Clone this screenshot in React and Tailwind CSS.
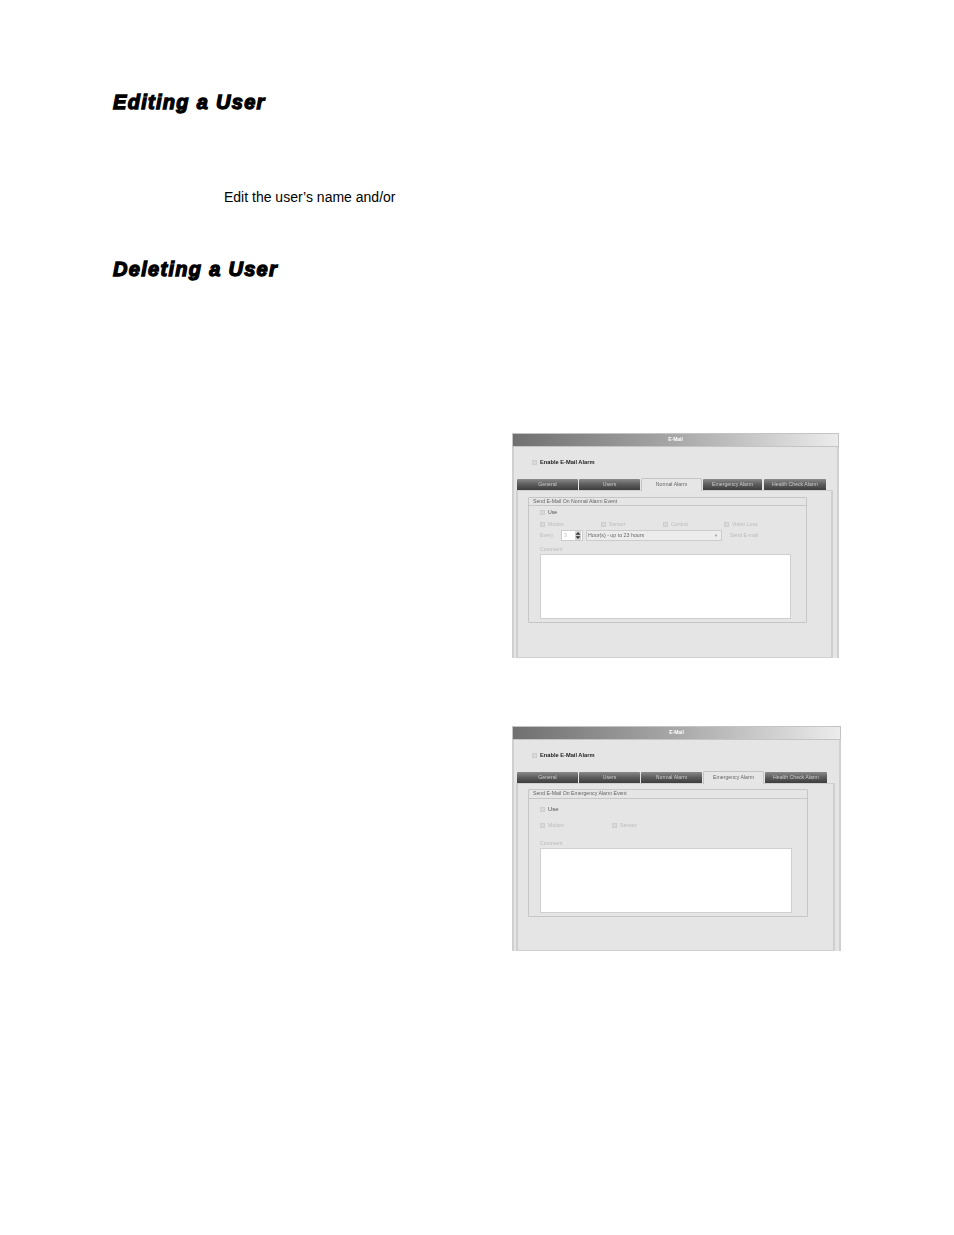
import React from 'react';

const Check = ({ label, className = '', labelClass = 'text-[#bbb] text-[5.2px]' }) => (
  <div className={`flex items-center gap-[3px] ${className}`}>
    <span className="w-[5px] h-[5px] bg-[#d9d9d9] border border-[#cdcdcd]" />
    <span className={`leading-[6px] ${labelClass}`}>{label}</span>
  </div>
);

const Tab = ({ label, active, className = '' }) =>
  active ? (
    <div className={`h-[13px] -mt-[1px] -mb-[1px] z-10 flex items-center justify-center text-[5.2px] text-[#666] bg-[#e6e6e6] border border-b-0 border-[#c4c4c4] rounded-t-[2px] ${className}`}>
      {label}
    </div>
  ) : (
    <div className={`h-[11px] flex items-center justify-center text-[5.2px] text-[#ccc] bg-gradient-to-b from-[#8a8a8a] via-[#5c5c5c] to-[#3e3e3e] rounded-t-[1px] ${className}`}>
      {label}
    </div>
  );

const Titlebar = ({ className = '' }) => (
  <div className={`flex items-center justify-center text-[5px] font-bold text-white bg-gradient-to-r from-[#707070] via-[#a8a8a8] to-[#ececec] border border-[#c4c4c4] ${className}`}>
    E-Mail
  </div>
);

const Enable = ({ className = '' }) => (
  <Check label="Enable E-Mail Alarm" labelClass="font-bold text-[#222] text-[5.7px]" className={`pl-[20px] ${className}`} />
);

const TabRow = ({ active, className = '' }) => (
  <div className={`flex pl-[5px] ${className}`}>
    <Tab label="General" className="w-[61px] mr-[1px]" />
    <Tab label="Users" className="w-[61px] mr-[1px]" />
    <Tab label="Normal Alarm" active={active === 'normal'} className="w-[61px] mr-[1px]" />
    <Tab label="Emergency Alarm" active={active === 'emergency'} className={active === 'emergency' ? 'w-[61px] mr-[1px]' : 'w-[59px] mr-[2px]'} />
    <Tab label="Health Check Alarm" className="w-[62px]" />
  </div>
);

const Spinner = () => (
  <svg width="6" height="9" viewBox="0 0 6 9" className="bg-[#d5d5d5]">
    <path d="M3 1 L5.5 3.8 L0.5 3.8 Z M3 8 L5.5 5.2 L0.5 5.2 Z" fill="#333" />
  </svg>
);

const NormalWindow = () => (
  <div className="w-[327px] h-[225px] flex flex-col bg-[#e5e5e5] border-x-2 border-[#d0d0d0] blur-[0.3px]">
    <Titlebar className="h-[14px] -mx-[2px]" />
    <Enable className="mt-[12px] -ml-[2px]" />
    <TabRow active="normal" className="mt-[14px] -ml-[2px]" />
    <div className="flex-1 ml-[2px] mr-[4px] border-x-2 border-b border-t border-[#cfcfcf] pl-[10px] pt-[6px]">
      <div className="w-[279px] h-[126px] border border-[#c6c6c6] rounded-[1px]">
        <div className="h-[8px] border-b border-[#c6c6c6] pl-[4px] flex items-center text-[5.2px] text-[#666]">Send E-Mail On Normal Alarm Event</div>
        <div className="pl-[11px]">
          <Check label="Use" labelClass="text-[#555] text-[5.2px]" className="mt-[3px]" />
          <div className="flex mt-[6px]">
            <Check label="Motion" className="w-[61px]" />
            <Check label="Sensor" className="w-[62px]" />
            <Check label="Control" className="w-[61px]" />
            <Check label="Video Loss" />
          </div>
          <div className="flex items-center mt-[3px] text-[5.2px] text-[#bbb]">
            <span className="w-[21px]">Every</span>
            <div className="w-[22px] h-[11px] bg-white border border-[#ccc] flex items-center justify-between pl-[2px] pr-[1px]">
              <span>3</span>
              <Spinner />
            </div>
            <div className="ml-[3px] w-[136px] h-[11px] bg-[#ececec] border border-[#ccc] flex items-center justify-between px-[1px] text-[5.3px] text-[#666]">
              <span>Hour(s) - up to 23 hours</span>
              <span className="text-[#999] text-[4px] pr-[2px]">▼</span>
            </div>
            <span className="ml-[8px]">Send E-mail</span>
          </div>
          <div className="mt-[5px] text-[5.2px] leading-[6px] text-[#bbb]">Comment</div>
          <div className="w-[251px] h-[65px] mt-[2px] bg-white border border-[#cfcfcf]" />
        </div>
      </div>
    </div>
  </div>
);

const EmergencyWindow = () => (
  <div className="w-[329px] h-[225px] flex flex-col bg-[#e5e5e5] border-x-2 border-[#d0d0d0] blur-[0.3px]">
    <Titlebar className="h-[14px] -mx-[2px]" />
    <Enable className="mt-[12px] -ml-[2px]" />
    <TabRow active="emergency" className="mt-[14px] -ml-[2px]" />
    <div className="flex-1 ml-[2px] mr-[4px] border-x-2 border-b border-t border-[#cfcfcf] pl-[10px] pt-[5px]">
      <div className="w-[280px] h-[128px] border border-[#c6c6c6] rounded-[1px]">
        <div className="h-[9px] border-b border-[#c6c6c6] pl-[4px] flex items-center text-[5.2px] text-[#666]">Send E-Mail On Emergency Alarm Event</div>
        <div className="pl-[11px]">
          <Check label="Use" labelClass="text-[#555] text-[6px]" className="mt-[7px]" />
          <div className="flex mt-[10px]">
            <Check label="Motion" className="w-[72px]" />
            <Check label="Sensor" />
          </div>
          <div className="mt-[12px] text-[5.2px] leading-[6px] text-[#bbb]">Comment</div>
          <div className="w-[252px] h-[65px] mt-[2px] bg-white border border-[#cfcfcf]" />
        </div>
      </div>
    </div>
  </div>
);

export default function App() {
  return (
    <div className="w-[954px] h-[1235px] bg-white font-['Liberation_Sans',Arial,sans-serif] text-black overflow-hidden">
      <div className="pt-[90px] pl-[113px]">
        <h2 className="h-[24px] text-[20px] leading-[24px] font-bold italic tracking-[1.3px] [-webkit-text-stroke:1.3px_black]">Editing a User</h2>
        <p className="mt-[75px] ml-[111px] h-[16px] text-[14px] leading-[16px]">Edit the user’s name and/or</p>
        <h2 className="mt-[52px] h-[24px] text-[20px] leading-[24px] font-bold italic tracking-[1.3px] [-webkit-text-stroke:1.3px_black]">Deleting a User</h2>
      </div>
      <div className="pl-[512px] pt-[152px]">
        <NormalWindow />
        <div className="mt-[68px]">
          <EmergencyWindow />
        </div>
      </div>
    </div>
  );
}
